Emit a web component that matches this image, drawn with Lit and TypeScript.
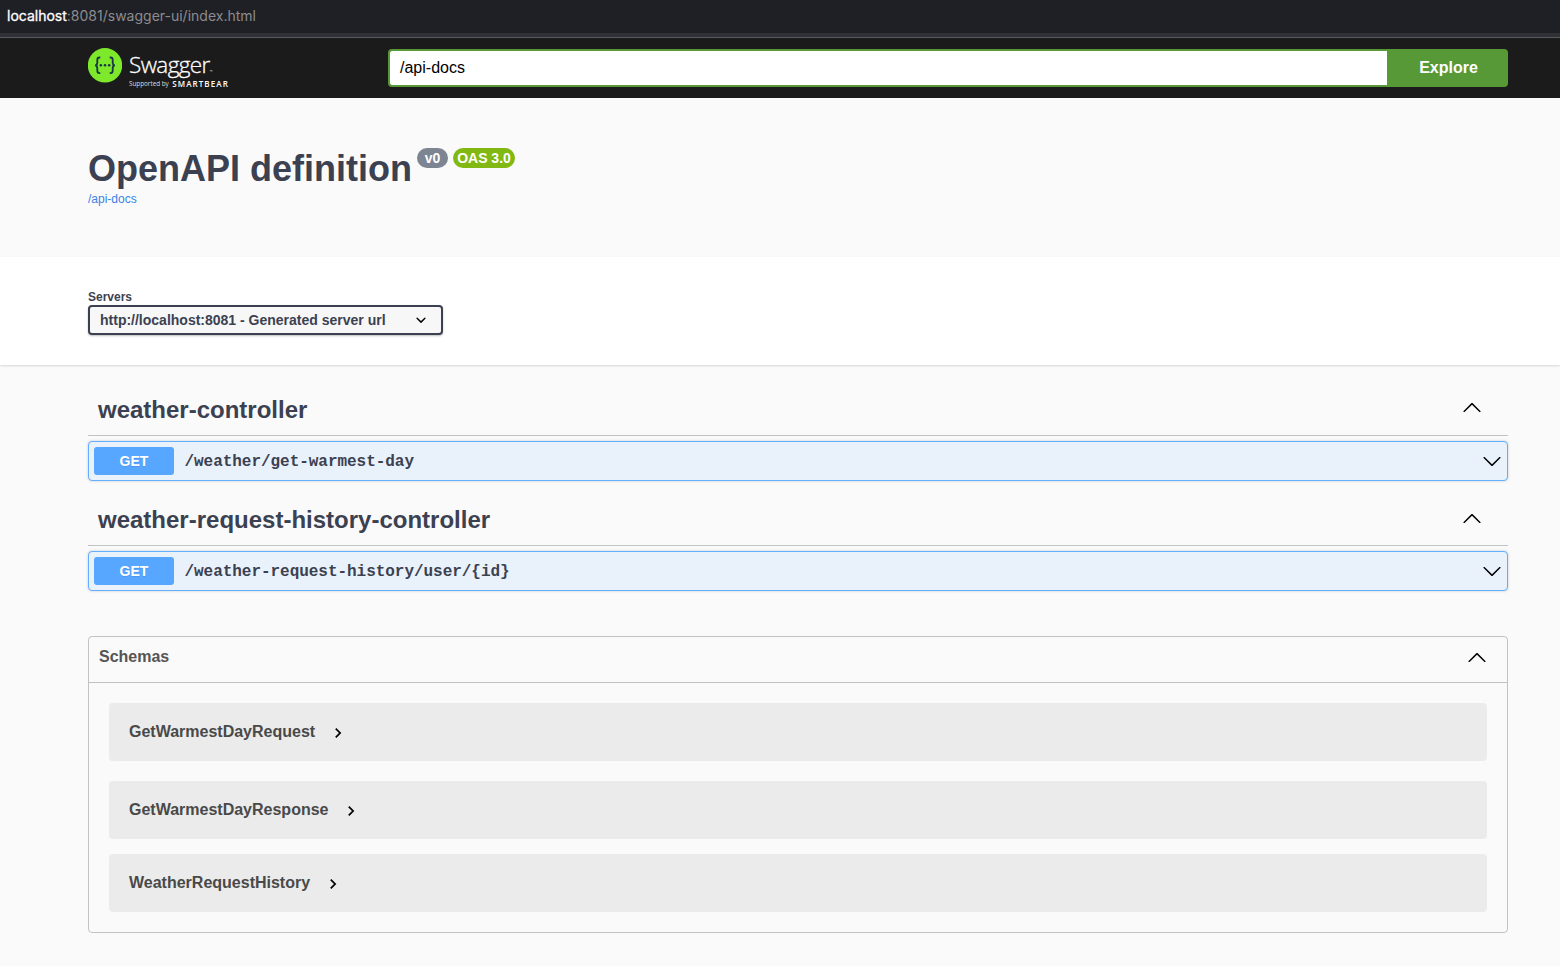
import { LitElement, html, css } from "lit";
import { customElement, property } from "lit/decorators.js";

const ARROW_UP =
  "M 17.418 14.908 C 17.69 15.176 18.127 15.176 18.397 14.908 C 18.667 14.64 18.668 14.207 18.397 13.939 L 10.489 6.109 C 10.219 5.841 9.782 5.841 9.51 6.109 L 1.602 13.939 C 1.332 14.207 1.332 14.64 1.602 14.908 C 1.873 15.176 2.311 15.176 2.581 14.908 L 10 7.767 Z";
const ARROW_DOWN =
  "M 17.418 6.109 C 17.69 5.841 18.127 5.841 18.397 6.109 C 18.667 6.377 18.668 6.81 18.397 7.078 L 10.489 14.908 C 10.219 15.176 9.782 15.176 9.51 14.908 L 1.602 7.078 C 1.332 6.81 1.332 6.377 1.602 6.109 C 1.873 5.841 2.311 5.841 2.581 6.109 L 10 13.25 Z";

const arrow = (d: string) =>
  html`<svg width="20" height="20" viewBox="0 0 20 20"><path d=${d}></path></svg>`;

@customElement("api-tag")
class ApiTag extends LitElement {
  @property() name = "";
  @property() path = "";

  static styles = css`
    :host { display: block; height: 110px; color: #3b4151; }
    svg { display: block; flex: none; }
    .tag { display: flex; align-items: center; box-sizing: border-box; height: 51px; padding: 0 26px 0 10px; border-bottom: 1px solid rgba(59, 65, 81, 0.3); }
    .name { flex: 1; font-size: 24px; line-height: 28px; font-weight: 700; }
    .tag svg { margin-top: var(--arrow-shift, -5px); }
    .block { display: flex; align-items: center; box-sizing: border-box; height: 40px; margin-top: 5px; padding: 0 5px; border: 1px solid #61affe; border-radius: 4px; background: #e9f1fb; box-shadow: 0 0 3px rgba(0, 0, 0, 0.19); }
    .method { width: 80px; height: 28px; border-radius: 3px; background: #57a6ff; color: #fff; font-size: 14px; line-height: 28px; font-weight: 700; text-align: center; text-shadow: 0 1px 0 rgba(0, 0, 0, 0.1); }
    .path { flex: 1; padding: 1px 0 0 10.5px; font: 700 16px/20px "Liberation Mono", monospace; letter-spacing: -0.04px; }
  `;

  render() {
    return html`
      <div class="tag"><div class="name">${this.name}</div>${arrow(ARROW_UP)}</div>
      <div class="block">
        <div class="method">GET</div>
        <div class="path">${this.path}</div>
        ${arrow(ARROW_DOWN)}
      </div>
    `;
  }
}

@customElement("app-root")
class AppRoot extends LitElement {
  static styles = css`
    :host { display: block; height: 966px; overflow: hidden; background: #fafafa; color: #3b4151; font-family: "Liberation Sans", Arial, sans-serif; }
    svg { display: block; flex: none; }
    .address { box-sizing: border-box; height: 38px; padding: 6px 7px 0; background: linear-gradient(#1f2025 0 33px, #303136 33px 37px, #58595c 37px); color: #8b8c8f; font: 14px/20px Inter, sans-serif; }
    .host { color: #fff; -webkit-text-stroke: 0.3px #fff; }
    .topbar { display: flex; box-sizing: border-box; height: 60px; padding: 10px 52px 0 88px; background: #1b1b1b; }
    .logo { display: flex; width: 300px; }
    .words { color: #fff; padding-left: 7px; font-family: "Open Sans", sans-serif; }
    .brand { height: 26px; padding-top: 4px; font-size: 22.5px; line-height: 26px; font-weight: 300; letter-spacing: -0.6px; -webkit-text-stroke: 0.3px #fff; }
    .tm { font-size: 4px; letter-spacing: 0; -webkit-text-stroke: 0; }
    .support { display: flex; align-items: center; gap: 3.5px; height: 12px; font-size: 6.3px; line-height: 12px; color: #ddd; }
    .bear { color: #fff; font-size: 8px; margin-top: -1px; font-weight: 600; letter-spacing: 1.1px; }
    .search { display: flex; flex: 1; height: 38px; margin-top: 1px; }
    .url { box-sizing: border-box; width: 999px; border: 2px solid #579936; border-right: 0; border-radius: 4px 0 0 4px; background: #fff; color: #000; padding-left: 10px; font-size: 16px; line-height: 34px; }
    .explore { flex: 1; padding-left: 2px; border-radius: 0 4px 4px 0; background: #579936; color: #fff; font-size: 16px; line-height: 37px; font-weight: 700; text-align: center; }
    .info { box-sizing: border-box; height: 159px; padding: 50px 88px 0; }
    .heading { display: flex; height: 42px; }
    .title { font-size: 36px; line-height: 42px; font-weight: 700; margin-right: 5px; }
    .badge { box-sizing: border-box; width: 31px; height: 20px; border-radius: 10px; background: #7d8492; color: #fff; font-size: 14px; line-height: 20px; font-weight: 700; text-align: center; }
    .oas { width: 62px; margin-left: 5px; background: #81b812; }
    .link { display: block; margin-top: 1px; color: #3b83e4; font-size: 12px; line-height: 16px; }
    .servers { box-sizing: border-box; height: 108px; padding: 32px 88px 0; background: #fff; box-shadow: 0 1px 2px rgba(0, 0, 0, 0.15); }
    .label { font-size: 12px; line-height: 16px; font-weight: 700; }
    .select { display: flex; align-items: center; justify-content: space-between; box-sizing: border-box; width: 355px; height: 30px; padding: 0 10px; border: 2px solid #3b4151; border-radius: 4px; background: #f7f7f7; box-shadow: 0 1px 2px rgba(0, 0, 0, 0.25); font-size: 14px; font-weight: 700; }
    .tags { padding: 20px 52px 0 88px; }
    .tags api-tag:first-child { --arrow-shift: -7px; }
    .schemas { box-sizing: border-box; height: 297px; margin: 31px 52px 0 88px; border: 1px solid rgba(59, 65, 81, 0.3); border-radius: 4px; }
    .schemas-head { display: flex; align-items: center; justify-content: space-between; box-sizing: border-box; height: 46px; padding: 0 20px 5px 10px; border-bottom: 1px solid rgba(59, 65, 81, 0.3); font-size: 16px; font-weight: 700; color: #555; }
    .models { padding: 20px 20px 0; }
    .model { display: flex; align-items: center; height: 58px; margin-bottom: 20px; padding-left: 20px; border-radius: 4px; background: #ebebeb; color: #494949; font-size: 16px; font-weight: 700; }
    .model:nth-child(2) { margin-bottom: 15px; }
    .model span { margin-top: -1px; }
    .model svg { margin: 2px 0 0 13px; }
  `;

  render() {
    return html`
      <div class="address"><span class="host">localhost</span>:8081/swagger-ui/index.html</div>
      <header class="topbar">
        <div class="logo">
          <svg width="34" height="35" viewBox="0 0 34 35">
            <circle cx="17" cy="17.3" r="17.2" fill="#7ee82b"></circle>
            <g fill="none" stroke="#173647" stroke-width="1.8">
              <path d="M12.3 9.5h-.8c-1.7 0-2.2.9-2.2 2.3v2.6c0 1.8-.5 2.8-2.2 2.9 1.7.1 2.2 1.1 2.2 2.9v2.6c0 1.4.5 2.3 2.2 2.3h.8"></path>
              <path d="M21.7 9.5h.8c1.7 0 2.2.9 2.2 2.3v2.6c0 1.8.5 2.8 2.2 2.9-1.7.1-2.2 1.1-2.2 2.9v2.6c0 1.4-.5 2.3-2.2 2.3h-.8"></path>
            </g>
            <g fill="#173647"><circle cx="12.8" cy="17.3" r="1.25"></circle><circle cx="17" cy="17.3" r="1.25"></circle><circle cx="21.2" cy="17.3" r="1.25"></circle></g>
          </svg>
          <div class="words">
            <div class="brand">Swagger<span class="tm">™</span></div>
            <div class="support"><span>Supported by</span><span class="bear">SMARTBEAR</span></div>
          </div>
        </div>
        <div class="search"><div class="url">/api-docs</div><div class="explore">Explore</div></div>
      </header>
      <section class="info">
        <div class="heading">
          <div class="title">OpenAPI definition</div>
          <div class="badge">v0</div>
          <div class="badge oas">OAS 3.0</div>
        </div>
        <a class="link">/api-docs</a>
      </section>
      <section class="servers">
        <div class="label">Servers</div>
        <div class="select">
          <span>http://localhost:8081 - Generated server url</span>
          <svg width="20" height="20" viewBox="0 0 20 20"><path d="M13.418 7.859a.695.695 0 01.978 0 .68.68 0 010 .969l-3.908 3.83a.697.697 0 01-.979 0l-3.908-3.83a.68.68 0 010-.969.695.695 0 01.978 0L10 11z"></path></svg>
        </div>
      </section>
      <section class="tags">
        <api-tag name="weather-controller" path="/weather/get-warmest-day"></api-tag>
        <api-tag name="weather-request-history-controller" path="/weather-request-history/user/{id}"></api-tag>
      </section>
      <section class="schemas">
        <div class="schemas-head"><span>Schemas</span>${arrow(ARROW_UP)}</div>
        <div class="models">
          ${["GetWarmestDayRequest", "GetWarmestDayResponse", "WeatherRequestHistory"].map(
            (name) => html`<div class="model"><span>${name}</span><svg width="20" height="20" viewBox="0 0 24 24"><path d="M10 6L8.59 7.41 13.17 12l-4.58 4.59L10 18l6-6z"></path></svg></div>`
          )}
        </div>
      </section>
    `;
  }
}
